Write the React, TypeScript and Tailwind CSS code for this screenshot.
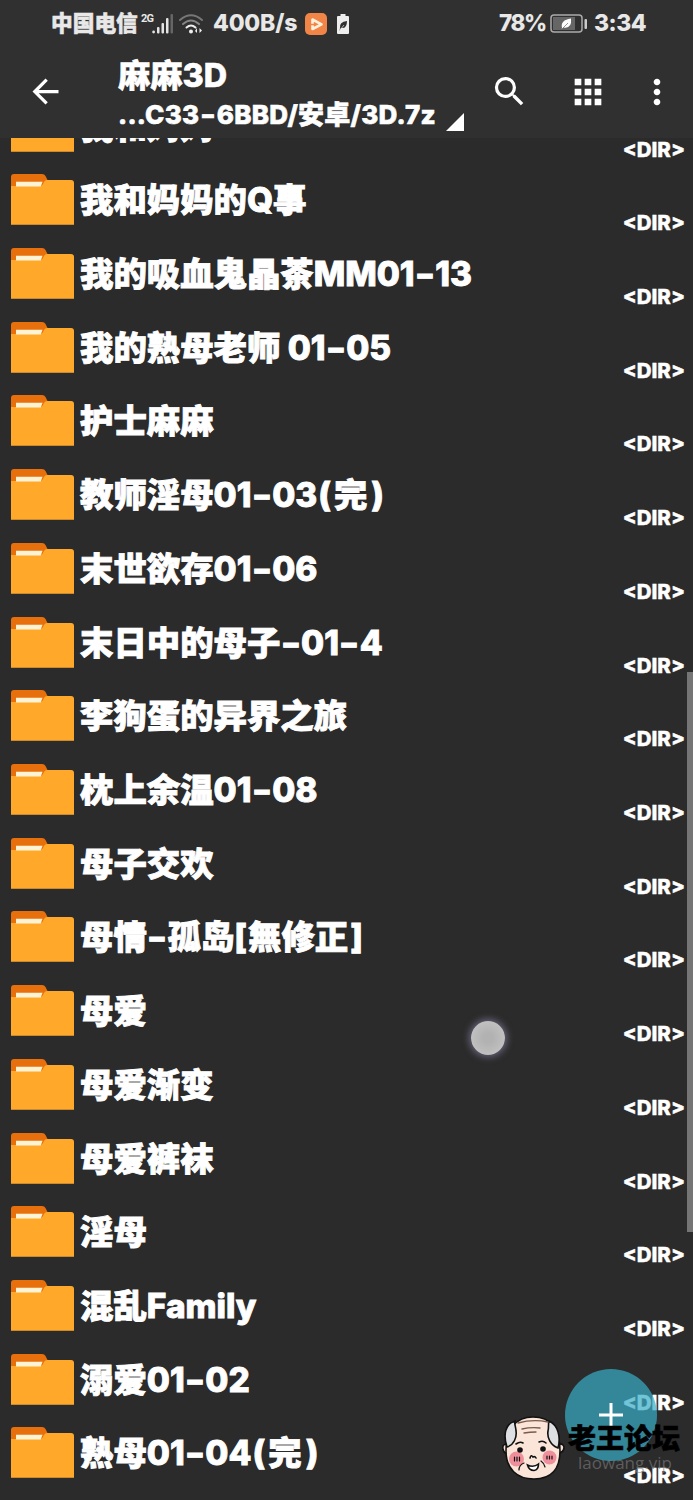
import clsx from 'clsx';
import { MdArrowBack, MdApps, MdMoreVert, MdSearch } from 'react-icons/md';

const ENTRIES = [
    '我和妈妈',
    '我和妈妈的Q事',
    '我的吸血鬼晶茶MM01-13',
    '我的熟母老师 01-05',
    '护士麻麻',
    '教师淫母01-03(完)',
    '末世欲存01-06',
    '末日中的母子-01-4',
    '李狗蛋的异界之旅',
    '枕上余温01-08',
    '母子交欢',
    '母情-孤岛[無修正]',
    '母爱',
    '母爱渐变',
    '母爱裤袜',
    '淫母',
    '混乱Family',
    '溺爱01-02',
    '熟母01-04(完)',
];

const MARK_STYLE: Record<string, string> = {
    '-': 'mx-[2.500px] scale-x-130',
    '(': 'ml-[1px] mr-[3px]',
    ')': 'ml-[4px]',
    '[': 'mr-[1px]',
    ']': 'ml-[2px]',
};

// hyphens and brackets get a little more room than the font gives them
function SpacedText({ text }: { text: string }) {
    return text.split(/([-()[\]])/).map((part, index) =>
        MARK_STYLE[part] ? (
            <span key={index} className={clsx('inline-block', MARK_STYLE[part])}>
                {part}
            </span>
        ) : (
            part
        ),
    );
}

function FolderIcon() {
    return (
        <svg viewBox="0 0 63 51" className="mt-[11px] h-[51px] w-[63px] shrink-0">
            <path d="M0 20V3q0-3 3-3h28q2.500 0 3.500 2l3 6v12z" fill="#e8700c" />
            <path d="M0 12h29.500q1.500 0 2.500-2l1-2q1-2 3-2h24q3 0 3 3v42H0z" fill="#ffa829" />
            <path d="M0 50h63v1H0z" fill="#c98a30" />
            <path d="M5 7.700h26.500L29.800 12.500H5z" fill="#fff3d6" />
        </svg>
    );
}

function SignalIcon() {
    return (
        <svg viewBox="0 0 22 20" className="h-5 w-[22px]" fill="#e4e4e4">
            <circle cx="1.600" cy="18" r="1.400" />
            <rect x="5" y="13" width="2.500" height="6.500" rx="1" />
            <rect x="9.500" y="9" width="2.500" height="10.500" rx="1" />
            <rect x="14" y="4" width="2.500" height="15.500" rx="1" />
            <rect x="18.500" y="0" width="2.500" height="19.500" rx="1" fill="#666" />
        </svg>
    );
}

function WifiIcon() {
    return (
        <svg viewBox="0 0 24 20" className="h-5 w-6" fill="none" strokeWidth="2" strokeLinecap="round">
            <path d="M1 6q11-9.500 22 0" stroke="#777" />
            <path d="M4 10q8-7 16 0" stroke="#858585" />
            <path d="M7.500 13.500q4.500-4 9 0" stroke="#eee" />
            <circle cx="12" cy="17.500" r="2" fill="#eee" />
            <path d="M18 14v5l-2-2zM20.500 19v-5l2.500 2.500z" fill="#eee" />
        </svg>
    );
}

function StatusBar() {
    return (
        <div className="flex h-[47px] items-center pl-[51px] pr-[48px] text-[#e8e8e8]">
            <span className="w-[88px] text-[21.700px] font-black leading-none [-webkit-text-stroke:0.500px_#e8e8e8]">中国电信</span>
            <span className="mb-[11px] ml-[2px] w-[11px] font-['Roboto'] text-[11px] font-bold leading-none tracking-[-0.800px]">2G</span>
            <span className="mt-[1px]"><SignalIcon /></span>
            <span className="ml-[5px]"><WifiIcon /></span>
            <span className="ml-[10px] w-[86px] text-[23px] leading-none tracking-[-0.200px]">400B/s</span>
            <svg viewBox="0 0 22 22" className="ml-[6px] h-[22px] w-[22px]">
                <rect width="22" height="22" rx="5" fill="#f08547" />
                <path d="M7.500 6.500v9.500l9-4.700z" fill="#f08547" stroke="#fff0dc" strokeWidth="2.600" strokeLinejoin="round" />
                <path d="M5 11.500h4" stroke="#f08547" strokeWidth="1.500" />
            </svg>
            <svg viewBox="0 0 12 20" className="ml-[10px] h-5 w-3">
                <path d="M3.500 0h5v2H11q1 0 1 1v16q0 1-1 1H1q-1 0-1-1V3q0-1 1-1h2.500z" fill="#eee" />
                <path d="M3 14q-1-6 7-7 0 8-6 7l-1.500 3" fill="#303030" />
                <path d="M3 16l4-5" stroke="#eee" strokeWidth="0.700" />
            </svg>
            <span className="ml-auto w-[45px] whitespace-nowrap text-[22.500px] leading-none tracking-[-1.400px]">78%</span>
            <svg viewBox="0 0 38 19" className="ml-[6px] h-[19px] w-[38px]">
                <rect x="1" y="1" width="31" height="17" rx="3" fill="none" stroke="#aaa" strokeWidth="1.500" />
                <rect x="3" y="3" width="22" height="13" fill="#666" />
                <path d="M12 14q-2-8 9-9.500Q22 15 13.500 13.500L11.500 15z" fill="#fff" />
                <path d="M12 15l6-6" stroke="#777" strokeWidth="0.800" />
                <rect x="34.500" y="5" width="2.500" height="10" rx="1" fill="#ccc" />
            </svg>
            <span className="ml-[6px] w-[51px] whitespace-nowrap text-[23px] leading-none tracking-[-0.500px]">3:34</span>
        </div>
    );
}

function Toolbar() {
    return (
        <div className="flex h-[91px] text-white">
            <MdArrowBack className="ml-[26px] mt-[25px] h-[39px] w-[39px] shrink-0" />
            <div className="ml-[53px] w-[350px] whitespace-nowrap [-webkit-text-stroke:0.600px_white]">
                <div className="mt-[10px] h-[38px] text-[32.300px] leading-[38px]">麻麻3D</div>
                <div className="flex h-[38px] text-[26px] leading-[38px] tracking-[0.250px]">
                    <span className="mt-[1px]"><SpacedText text="...C33-6BBD/安卓/3D.7z" /></span>
                    <svg viewBox="0 0 18 18" className="ml-[10px] mt-[18px] h-[18px] w-[18px]">
                        <path d="M0 18L18 0v18z" fill="#fff" />
                    </svg>
                </div>
            </div>
            <MdSearch className="ml-[22px] mt-[25px] h-[39px] w-[39px] shrink-0" />
            <MdApps className="ml-[39px] mt-[25px] h-[40px] w-[40px] shrink-0" />
            <MdMoreVert className="ml-[29px] mt-[25px] h-[40px] w-[40px] shrink-0" />
        </div>
    );
}

function EntryRow({ name }: { name: string }) {
    return (
        <li className="flex h-[73.720px] pl-[11px] text-white">
            <FolderIcon />
            <span className="ml-[6px] mt-[15px] h-[44px] whitespace-nowrap text-[33.400px] leading-[44px] [-webkit-text-stroke:0.900px_white]">
                <SpacedText text={name} />
            </span>
            <span className="ml-auto mr-[8px] mt-[48px] h-6 text-[20.500px] leading-6 [-webkit-text-stroke:0.400px_white]">&lt;DIR&gt;</span>
        </li>
    );
}

function OldManFace() {
    return (
        <svg viewBox="0 0 63 67" className="h-[67px] w-[63px]" fill="none" stroke="#111" strokeWidth="1.600" strokeLinecap="round">
            <path d="M5 29q-5 0-4 5 1 5 6 5M56 29q6-1 6 4-1 5-6 5" fill="#f7dfd2" />
            <path d="M31 2C14 2 4 14 4 36c0 18 11 28 28 28s26-10 26-28C58 14 49 2 31 2z" fill="#fbe4d8" />
            <path d="M13 6C3 9 1 20 5 32c7-2 10-10 9-16 0-4-2-7-1-10zM47 6c9 4 12 16 9 27-8-3-11-11-10-17 1-4 0-7 1-10z" fill="#dedfe3" />
            <path d="M16 8q15-4 30-1M20 14q9-2 18-1M22 18q6-1 12-1" stroke="#795b4d" strokeWidth="1.300" />
            <g stroke="none">
                <circle cx="14.500" cy="44" r="7.500" fill="#f08f9c" />
                <circle cx="47.500" cy="42.500" r="7" fill="#f08f9c" />
                <circle cx="18" cy="35" r="2.800" fill="#111" />
                <circle cx="41" cy="34" r="2.800" fill="#111" />
            </g>
            <path d="M14 29q4-3 7-1M37 27q4-2 7 1M28 43q1-4 3-1 2-1 3 1" />
            <path d="M12.500 42v4M15 42v4M17.500 42v4M45 41v3M47.500 41v3M50 41v3" strokeWidth="1.200" />
            <path d="M22 48q-5 2-5 7M39 46q3 2 4 6" strokeWidth="1.200" />
            <path d="M25.500 50q6 3 11-1 0 6-4.500 6.500-5 0-6.500-5.500z" fill="#fff" />
        </svg>
    );
}

export default function App() {
    return (
        <div className="relative flex h-[1500px] w-[693px] flex-col overflow-hidden bg-[#2b2b2b] font-['Inter','Noto_Sans_CJK_SC',sans-serif] font-extrabold">
            <header className="h-[138px] shrink-0 bg-[#303030]">
                <StatusBar />
                <Toolbar />
            </header>
            <main className="min-h-0 flex-1 overflow-hidden">
                <ul className="-mt-[48.500px]">
                    {ENTRIES.map((name) => (
                        <EntryRow key={name} name={name} />
                    ))}
                </ul>
            </main>

            <div className="absolute right-0 top-[672px] h-[560px] w-[6px] bg-[#757575]" />
            {/* touch pointer */}
            <div className="absolute left-[471px] top-[1021px] h-[34px] w-[34px] rounded-full bg-[radial-gradient(circle,#b2b2b2_20%,#c9c9c9_100%)] shadow-[0_0_7px_2px_#67657c]" />
            <button
                aria-label="添加"
                className="absolute left-[565px] top-[1369px] flex h-[92px] w-[92px] items-center justify-center rounded-full bg-[#39adc7]/71"
            >
                <svg viewBox="0 0 24 24" className="h-6 w-6" stroke="#fff" strokeWidth="3">
                    <path d="M12 0v24M0 12h24" />
                </svg>
            </button>
            <div className="absolute left-[502px] top-[1415px] flex">
                <OldManFace />
                <div className="ml-[3px] mt-[8px] whitespace-nowrap">
                    <div className="text-[28px] font-black leading-[32px] text-black [-webkit-text-stroke:0.600px_black]">老王论坛</div>
                    <div className="ml-[10px] font-['Open_Sans',sans-serif] text-[17px] font-normal leading-[16px] text-[#808080]/60">laowang.vip</div>
                </div>
            </div>
        </div>
    );
}
